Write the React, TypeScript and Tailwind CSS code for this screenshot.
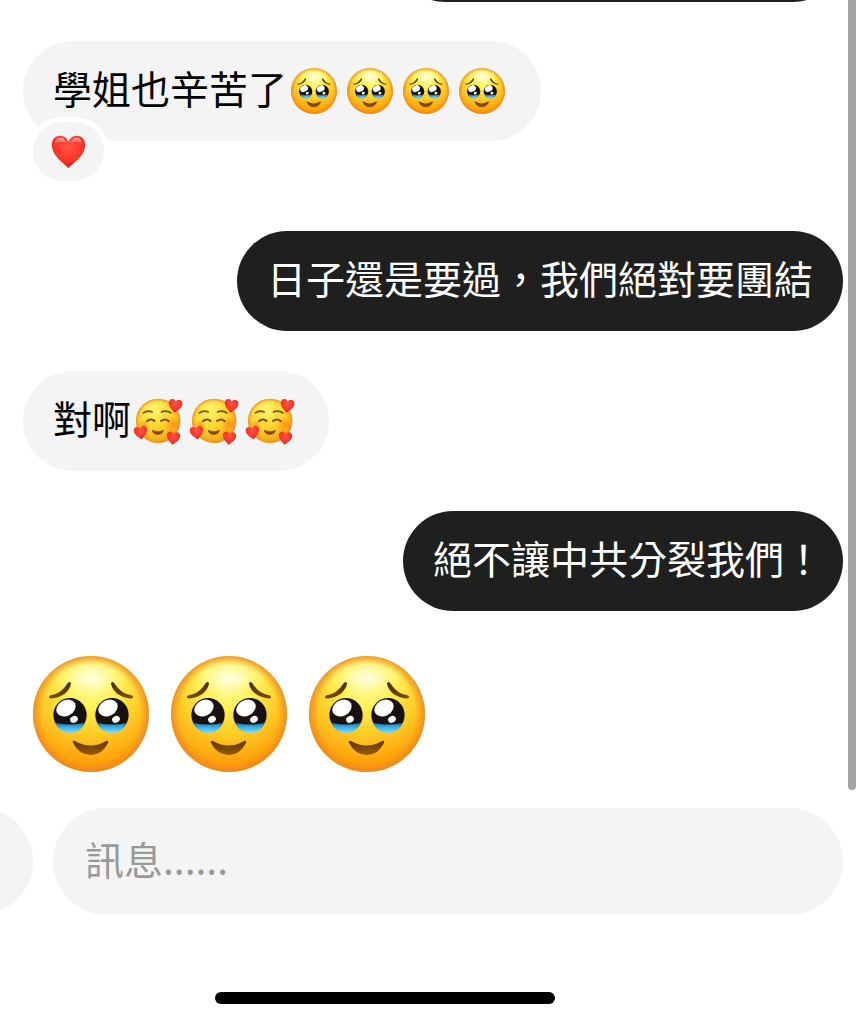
import React from "react";
import clsx from "clsx";

const HEART_PATH =
  "M50 96 C42 84 4 64 2 31 C1 12 13 2 26 2 C38 2 47 10 50 20 C53 10 62 2 74 2 C87 2 99 12 98 31 C96 64 58 84 50 96 Z";

// gradients shared by every emoji on the page
const EmojiDefs = () => (
  <svg className="absolute h-0 w-0" aria-hidden="true">
    <defs>
      <radialGradient id="face" cx="0.5" cy="0.2" r="0.82">
        <stop offset="0" stopColor="#fffcae" />
        <stop offset="0.28" stopColor="#fff35a" />
        <stop offset="0.58" stopColor="#fdcb25" />
        <stop offset="1" stopColor="#ff8f00" />
      </radialGradient>
      <radialGradient id="rim" cx="0.5" cy="0.5" r="0.5">
        <stop offset="0.84" stopColor="#ee8a20" stopOpacity="0" />
        <stop offset="1" stopColor="#e98528" stopOpacity="0.8" />
      </radialGradient>
      <radialGradient id="loveFace" cx="0.4" cy="0.25" r="0.8">
        <stop offset="0" stopColor="#fff56c" />
        <stop offset="0.5" stopColor="#fdd42c" />
        <stop offset="1" stopColor="#f99c16" />
      </radialGradient>
      <radialGradient id="blush">
        <stop offset="0" stopColor="#ff7a12" stopOpacity="0.65" />
        <stop offset="1" stopColor="#ff7a12" stopOpacity="0" />
      </radialGradient>
      <radialGradient id="shine">
        <stop offset="0" stopColor="#fffff0" stopOpacity="0.8" />
        <stop offset="1" stopColor="#fffbb0" stopOpacity="0" />
      </radialGradient>
      <linearGradient id="tear" x1="0" y1="0" x2="0" y2="1">
        <stop offset="0" stopColor="#1678ad" />
        <stop offset="0.45" stopColor="#36b3ea" />
        <stop offset="1" stopColor="#7fdcff" />
      </linearGradient>
      <linearGradient id="brow" x1="0" y1="0" x2="0" y2="1">
        <stop offset="0" stopColor="#4f2b00" />
        <stop offset="1" stopColor="#7d4900" />
      </linearGradient>
      <linearGradient id="mouth" x1="0" y1="0" x2="0" y2="1">
        <stop offset="0" stopColor="#5e3400" />
        <stop offset="1" stopColor="#9a5c05" />
      </linearGradient>
      <radialGradient id="heart" cx="0.5" cy="0.35" r="0.7">
        <stop offset="0" stopColor="#ff5548" />
        <stop offset="0.6" stopColor="#f93529" />
        <stop offset="1" stopColor="#c51a12" />
      </radialGradient>
      <linearGradient id="gloss" x1="0" y1="0" x2="0" y2="1">
        <stop offset="0" stopColor="#ffffff" stopOpacity="0.6" />
        <stop offset="1" stopColor="#ffffff" stopOpacity="0" />
      </linearGradient>
    </defs>
  </svg>
);

const Eye = ({ x }: { x: number }) => (
  <g transform={`translate(${x} 59)`}>
    <ellipse cx="0" cy="1" rx="17.2" ry="17.6" fill="#e8c25a" />
    <ellipse cx="0" cy="0" rx="16.6" ry="17" fill="#17110f" />
    <path
      d="M-14 8 Q0 11 14 8 Q11 17.6 0 17.8 Q-11 17.6 -14 8 Z"
      fill="url(#tear)"
    />
    <ellipse
      cx="-4"
      cy="-7"
      rx="10.2"
      ry="7.8"
      fill="#fff"
      transform="rotate(-28 -4 -7)"
    />
    <ellipse
      cx="4"
      cy="4.4"
      rx="4"
      ry="3.2"
      fill="#fff"
      transform="rotate(-28 4 4.4)"
    />
  </g>
);

const TearyFace = ({ className }: { className: string }) => (
  <svg
    viewBox="0 0 116 116"
    className={className}
    role="img"
    aria-label="face holding back tears"
  >
    <circle cx="58" cy="58" r="58" fill="url(#face)" />
    <circle cx="58" cy="58" r="58" fill="url(#rim)" />
    <ellipse cx="58" cy="22" rx="38" ry="18" fill="url(#shine)" />
    <path
      d="M17 39.500 Q28 38 34.500 27.500 Q37.500 24.500 38 28 Q35 40 19 42.500 Q14 42.500 17 39.500 Z"
      fill="url(#brow)"
    />
    <path
      d="M99 39.500 Q88 38 81.500 27.500 Q78.500 24.500 78 28 Q81 40 97 42.500 Q102 42.500 99 39.500 Z"
      fill="url(#brow)"
    />
    <Eye x={37} />
    <Eye x={79} />
    <path
      d="M42 85 Q58 94 73 85 Q76 84 75 87 Q69 99 58 99 Q46 99 40 87 Q39 84 42 85 Z"
      fill="url(#mouth)"
    />
  </svg>
);

const LoveFace = ({ className }: { className: string }) => (
  <svg
    viewBox="0 0 151 142"
    className={className}
    role="img"
    aria-label="smiling face with hearts"
  >
    <circle cx="76" cy="69" r="67" fill="url(#loveFace)" />
    <circle cx="76" cy="69" r="67" fill="url(#rim)" />
    <circle cx="120" cy="80" r="24" fill="url(#blush)" />
    <circle cx="32" cy="84" r="18" fill="url(#blush)" />
    <g fill="none" stroke="#7d4a08" strokeWidth="5" strokeLinecap="round">
      <path d="M31 45 Q44 36 58 42" />
      <path d="M86 42 Q101 36 115 45" />
      <path d="M42 70 Q53 60 65 69" strokeWidth="6" />
      <path d="M85 69 Q97 60 108 70" strokeWidth="6" />
    </g>
    <path
      d="M58 97 Q75 105 92 97 Q94 98 92 101 Q86 111 75 111 Q64 111 58 101 Q56 98 58 97 Z"
      fill="#7d4a08"
    />
    <g fill="url(#heart)">
      <path d={HEART_PATH} transform="translate(109 1) rotate(7) scale(0.43)" />
      <path d={HEART_PATH} transform="translate(0 88) rotate(-7) scale(0.42)" />
      <path d={HEART_PATH} transform="translate(103 99) rotate(7) scale(0.42)" />
    </g>
  </svg>
);

const Heart = ({ className }: { className: string }) => (
  <svg
    viewBox="0 0 100 98"
    className={className}
    role="img"
    aria-label="red heart"
  >
    <path d={HEART_PATH} fill="url(#heart)" />
    <path
      d="M9 26 Q12 7 27 7 Q39 8 44 24 Q28 14 9 26 Z"
      fill="url(#gloss)"
    />
    <path
      d="M56 24 Q61 8 73 7 Q88 7 91 26 Q72 14 56 24 Z"
      fill="url(#gloss)"
    />
  </svg>
);

type BubbleProps = {
  mine?: boolean;
  className?: string;
  children?: React.ReactNode;
};

const Bubble = ({ mine, className, children }: BubbleProps) => (
  <div
    className={clsx(
      "flex h-[100px] shrink-0 items-center rounded-full",
      mine ? "self-end bg-[#1f1f1f] text-white" : "self-start bg-[#f4f4f4] text-black",
      className ?? "px-[30px]"
    )}
  >
    {children}
  </div>
);

const MessageText = ({ children }: { children: React.ReactNode }) => (
  <p className="pb-2">{children}</p>
);

const App = () => {
  return (
    <div
      lang="zh-Hant"
      className="min-h-screen overflow-hidden bg-white font-['Noto_Sans_CJK_TC',sans-serif] text-[39px] leading-[56px]"
    >
      <EmojiDefs />

      <main className="relative flex flex-col pr-4 pb-9 pl-[23px]">
        {/* tail end of the message scrolled off the top */}
        <div className="flex h-0.5 flex-col justify-end overflow-hidden">
          <Bubble mine className="w-[448px]" />
        </div>

        <div className="relative mt-[39px] flex flex-col">
          <Bubble>
            <MessageText>學姐也辛苦了</MessageText>
            <div className="flex">
              {[0, 1, 2, 3].map((i) => (
                <TearyFace key={i} className="mr-1.5 ml-1 h-[46px] w-[46px]" />
              ))}
            </div>
          </Bubble>
          <button
            type="button"
            aria-label="reactions"
            className="absolute top-[76px] left-[5px] flex h-[69px] w-[81px] items-center justify-center rounded-full border-[5px] border-white bg-[#f4f4f4]"
          >
            <Heart className="h-[34px] w-[35px]" />
          </button>
        </div>

        <div className="mt-[90px] flex flex-col gap-10">
          <Bubble mine>
            <MessageText>日子還是要過，我們絕對要團結</MessageText>
          </Bubble>

          <Bubble>
            <MessageText>對啊</MessageText>
            <div className="flex">
              {[0, 1, 2].map((i) => (
                <LoveFace key={i} className="mr-1 ml-0.5 h-[47px] w-[50px]" />
              ))}
            </div>
          </Bubble>

          <Bubble mine className="pr-5 pl-[30px]">
            <MessageText>絕不讓中共分裂我們！</MessageText>
          </Bubble>
        </div>

        <div className="mt-[45px] flex gap-[22px] pl-2.5">
          {[0, 1, 2].map((i) => (
            <TearyFace key={i} className="h-[116px] w-[116px]" />
          ))}
        </div>

        <div className="absolute top-0 right-[3px] bottom-[18px] w-2 rounded-b-full bg-[#a3a3a3]" />
      </main>

      <footer>
        <form
          className="flex items-center gap-5 pr-4"
          onSubmit={(e) => e.preventDefault()}
        >
          <div className="flex w-[33px] shrink-0 justify-end overflow-hidden">
            <button
              type="button"
              aria-label="camera"
              className="h-[107px] w-[107px] shrink-0 rounded-full bg-[#f4f4f4]"
            />
          </div>
          <input
            type="text"
            aria-label="訊息"
            placeholder="訊息......"
            className="h-[107px] min-w-0 flex-1 rounded-full bg-[#f4f4f4] px-8 pb-2 text-black outline-none placeholder:text-[#999999]"
          />
        </form>
        <div className="mt-[77px] mb-5 ml-[25%] h-3 w-[340px] rounded-full bg-black" />
      </footer>
    </div>
  );
};

export default App;
